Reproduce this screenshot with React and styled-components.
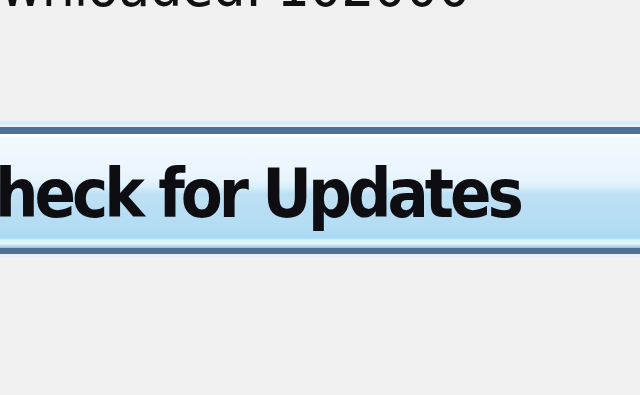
import React from "react";
import styled, { createGlobalStyle } from "styled-components";

const GlobalStyle = createGlobalStyle`
	html, body {
		margin: 0;
		padding: 0;
		background: #f0f0f0;
		overflow: hidden;
	}
`;

const Page = styled.div`
	width: 640px;
	height: 395px;
	overflow: hidden;
	display: flex;
	flex-direction: column;
`;

const Status = styled.div`
	margin-top: -46px;
	margin-left: -70px;
	font-family: "DejaVu Sans Condensed", "DejaVu Sans", sans-serif;
	font-size: 58px;
	line-height: 64px;
	letter-spacing: -1px;
	color: #111;
	white-space: nowrap;
`;

const ButtonRow = styled.div`
	margin-top: 103px;
	margin-left: -20px;
	width: 700px;
	padding: 2px 0 1px;
	border-top: 4px solid #d6eef8;
	border-bottom: 2px solid #e2f1f7;
`;

const UpdateButton = styled.button`
	display: flex;
	align-items: center;
	width: 100%;
	height: 127px;
	padding: 0;
	border: 0;
	border-top: 7px solid #4b7196;
	border-bottom: 6px solid #4b7196;
	background: linear-gradient(
		to bottom,
		#ffffff 0px,
		#f3fafe 4px,
		#e8f4fc 45px,
		#dcf0fb 52px,
		#bee0f4 60px,
		#b2dcf3 96px,
		#a7d8f5 104px,
		#d4f4fc 106px,
		#e2f7fd 110px,
		#9fb9cf 114px
	);
	font-family: "DejaVu Sans Condensed", "DejaVu Sans", sans-serif;
	font-weight: bold;
	font-size: 68px;
	letter-spacing: -4px;
	color: #0d0d12;
	white-space: nowrap;
	cursor: pointer;
`;

const Label = styled.span`
	margin-left: -26px;
	margin-top: 4px;
`;

export default function App() {
	return (
		<Page>
			<GlobalStyle />
			<Status>Downloaded: 102000</Status>
			<ButtonRow>
				<UpdateButton>
					<Label>Check for Updates</Label>
				</UpdateButton>
			</ButtonRow>
		</Page>
	);
}
